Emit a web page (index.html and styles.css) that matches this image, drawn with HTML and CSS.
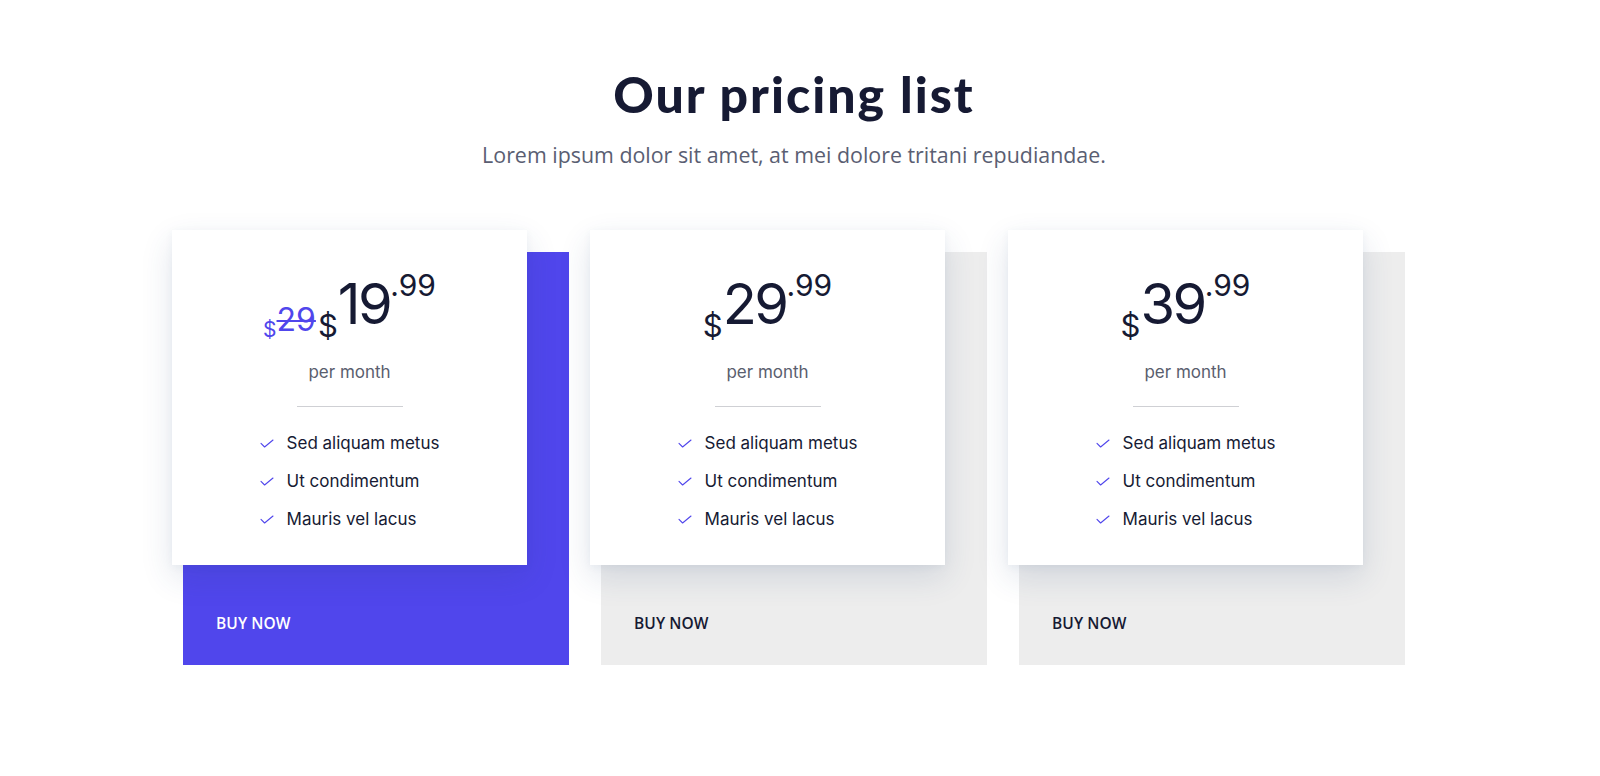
FILE: index.html
```html
<!DOCTYPE html>
<html lang="en">
<head>
<meta charset="utf-8">
<title>Our pricing list</title>
<link rel="stylesheet" href="styles.css">
</head>
<body>
<main class="page">
  <header class="intro">
    <h1 class="title">Our pricing list</h1>
    <p class="subtitle">Lorem ipsum dolor sit amet, at mei dolore tritani repudiandae.</p>
  </header>
  <section class="plans">
    <article class="plan plan--featured">
      <div class="card">
        <div class="price">
          <span class="old"><span class="old-cur">$</span><s class="old-num">29</s></span><span class="cur">$</span><span class="amount">19</span><span class="cents">.99</span>
        </div>
        <p class="period">per month</p>
        <hr class="divider">
        <ul class="features">
          <li class="feature"><svg class="check" viewBox="0 0 14 9" width="14" height="9"><path d="M1 4.4 L4.6 8 L13 1" fill="none" stroke="currentColor" stroke-width="1.1" stroke-linecap="round" stroke-linejoin="round"/></svg>Sed aliquam metus</li>
          <li class="feature"><svg class="check" viewBox="0 0 14 9" width="14" height="9"><path d="M1 4.4 L4.6 8 L13 1" fill="none" stroke="currentColor" stroke-width="1.1" stroke-linecap="round" stroke-linejoin="round"/></svg>Ut condimentum</li>
          <li class="feature"><svg class="check" viewBox="0 0 14 9" width="14" height="9"><path d="M1 4.4 L4.6 8 L13 1" fill="none" stroke="currentColor" stroke-width="1.1" stroke-linecap="round" stroke-linejoin="round"/></svg>Mauris vel lacus</li>
        </ul>
      </div>
      <a class="buy" href="#">BUY NOW</a>
    </article>
    <article class="plan">
      <div class="card">
        <div class="price">
          <span class="cur">$</span><span class="amount">29</span><span class="cents">.99</span>
        </div>
        <p class="period">per month</p>
        <hr class="divider">
        <ul class="features">
          <li class="feature"><svg class="check" viewBox="0 0 14 9" width="14" height="9"><path d="M1 4.4 L4.6 8 L13 1" fill="none" stroke="currentColor" stroke-width="1.1" stroke-linecap="round" stroke-linejoin="round"/></svg>Sed aliquam metus</li>
          <li class="feature"><svg class="check" viewBox="0 0 14 9" width="14" height="9"><path d="M1 4.4 L4.6 8 L13 1" fill="none" stroke="currentColor" stroke-width="1.1" stroke-linecap="round" stroke-linejoin="round"/></svg>Ut condimentum</li>
          <li class="feature"><svg class="check" viewBox="0 0 14 9" width="14" height="9"><path d="M1 4.4 L4.6 8 L13 1" fill="none" stroke="currentColor" stroke-width="1.1" stroke-linecap="round" stroke-linejoin="round"/></svg>Mauris vel lacus</li>
        </ul>
      </div>
      <a class="buy" href="#">BUY NOW</a>
    </article>
    <article class="plan">
      <div class="card">
        <div class="price">
          <span class="cur">$</span><span class="amount">39</span><span class="cents">.99</span>
        </div>
        <p class="period">per month</p>
        <hr class="divider">
        <ul class="features">
          <li class="feature"><svg class="check" viewBox="0 0 14 9" width="14" height="9"><path d="M1 4.4 L4.6 8 L13 1" fill="none" stroke="currentColor" stroke-width="1.1" stroke-linecap="round" stroke-linejoin="round"/></svg>Sed aliquam metus</li>
          <li class="feature"><svg class="check" viewBox="0 0 14 9" width="14" height="9"><path d="M1 4.4 L4.6 8 L13 1" fill="none" stroke="currentColor" stroke-width="1.1" stroke-linecap="round" stroke-linejoin="round"/></svg>Ut condimentum</li>
          <li class="feature"><svg class="check" viewBox="0 0 14 9" width="14" height="9"><path d="M1 4.4 L4.6 8 L13 1" fill="none" stroke="currentColor" stroke-width="1.1" stroke-linecap="round" stroke-linejoin="round"/></svg>Mauris vel lacus</li>
        </ul>
      </div>
      <a class="buy" href="#">BUY NOW</a>
    </article>
  </section>
</main>
</body>
</html>
```
FILE: styles.css
```css
* { box-sizing: border-box; }
html, body { margin: 0; padding: 0; background: #ffffff; }
body { font-family: "Inter", "Noto Sans", sans-serif; color: #161a33; }

.page {
  width: 1588px;
  padding-top: 64px;
  display: flex;
  flex-direction: column;
  align-items: center;
}

.intro { text-align: center; }
.title {
  margin: 0;
  font-family: "Lato", "Noto Sans", sans-serif;
  font-weight: 900;
  font-size: 50px;
  line-height: 60px;
  color: #161a33;
  letter-spacing: 2px;
}
.subtitle {
  margin: 16px 0 0;
  font-family: "Open Sans", "Noto Sans", sans-serif;
  font-size: 21.4px;
  line-height: 30px;
  color: #5a5e72;
}

.plans {
  margin-top: 82px;
  display: flex;
  gap: 32px;
}

.plan {
  width: 386px;
  background: #ededed;
  display: flex;
  flex-direction: column;
}
.plan--featured { background: #5046ec; }

.card {
  width: 355px;
  margin: -22px 0 0 -11px;
  background: #ffffff;
  box-shadow: 0 12px 30px rgba(40, 70, 120, 0.14), 0 2px 8px rgba(40, 70, 120, 0.05);
  padding: 46px 0 27px;
  display: flex;
  flex-direction: column;
  align-items: center;
}

.price {
  font-size: 56px;
  line-height: 56px;
  height: 56px;
  white-space: nowrap;
  color: #161a33;
  font-weight: 400;
}
.amount { letter-spacing: -2.5px; }
.cur { font-size: 31px; line-height: 0; vertical-align: -13px; margin-right: 0; }
.cents { font-size: 30px; line-height: 0; vertical-align: 28px; margin-left: 0; }
.old { color: #5046ec; margin-right: 2px; line-height: 0; }
.old-cur { font-size: 21px; line-height: 0; vertical-align: -13px; }
.old-num { font-size: 32px; line-height: 0; vertical-align: -7px; text-decoration-thickness: 1.6px; }

.period {
  margin: 28px 0 0;
  font-size: 17px;
  line-height: 24px;
  color: #5a5e6e;
}

.divider {
  margin: 22px 0 0;
  width: 106px;
  height: 1px;
  border: 0;
  background: #cfd0d4;
}

.features {
  list-style: none;
  margin: 17px 0 0;
  padding: 0;
}
.feature {
  display: flex;
  align-items: center;
  gap: 13px;
  font-size: 17px;
  line-height: 38px;
  color: #161a33;
}
.check { color: #5046ec; flex: none; }

.buy {
  margin: 48px 0 32px 33px;
  font-family: "Open Sans", "Noto Sans", sans-serif;
  font-size: 15.5px;
  font-weight: 600;
  line-height: 20px;
  letter-spacing: 0.1px;
  color: #161a33;
  text-decoration: none;
}
.plan--featured .buy { color: #ffffff; }
```
